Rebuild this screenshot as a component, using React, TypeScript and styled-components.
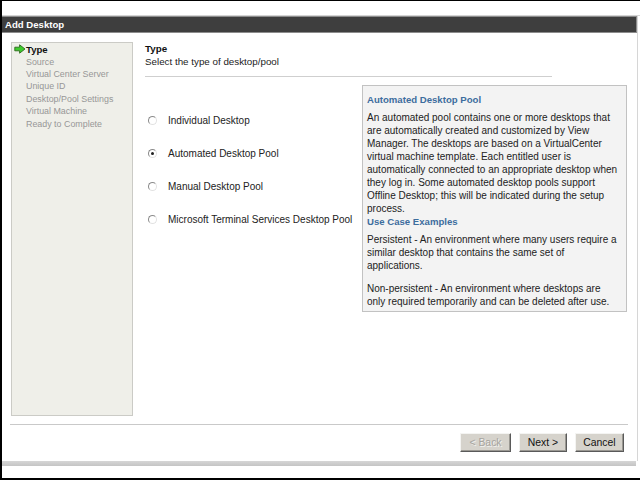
import React from 'react'
import styled, { createGlobalStyle } from 'styled-components'

const GlobalStyle = createGlobalStyle`
  html, body {
    margin: 0;
    padding: 0;
    background: #000000;
  }
  * {
    box-sizing: border-box;
  }
`

const Screen = styled.div`
  width: 640px;
  height: 480px;
  display: flex;
  flex-direction: column;
  background: #ffffff;
  border-top: 1px solid #000000;
  border-left: 2px solid #000000;
  border-bottom: 2px solid #000000;
  font-family: 'Liberation Sans', Arial, sans-serif;
  overflow: hidden;
`

const TopStrip = styled.div`
  height: 15px;
  border-bottom: 1px solid #d4d4d4;
`

const Dialog = styled.div`
  width: 636px;
  display: flex;
  flex-direction: column;
  border-right: 1px solid #d6d6d6;
`

const TitleBar = styled.div`
  height: 17px;
  display: flex;
  align-items: center;
  padding-left: 3px;
  background: #3e3e3e;
  border: 1px solid #8c8c8c;
  border-left: none;
  color: #ffffff;
  font-size: 9.6px;
  font-weight: bold;
`

const Body = styled.div`
  display: flex;
  padding: 9px 10px 0 9px;
  gap: 12px;
`

const Nav = styled.div`
  width: 122px;
  height: 374px;
  display: flex;
  flex-direction: column;
  background: #efefe9;
  border: 1px solid #cbcbc6;
  padding-left: 1px;
`

const NavItem = styled.div<{ $current?: boolean }>`
  display: flex;
  align-items: center;
  height: 12.4px;
  padding-left: 13px;
  font-size: ${(p) => (p.$current ? '9.6px' : '8.9px')};
  font-weight: ${(p) => (p.$current ? 'bold' : 'normal')};
  color: ${(p) => (p.$current ? '#111111' : '#979797')};
  white-space: nowrap;
  position: relative;

  svg {
    position: absolute;
    left: 1px;
    top: 1px;
  }
`

const Main = styled.div`
  flex: 1;
  display: flex;
  flex-direction: column;
`

const Heading = styled.div`
  font-size: 9.8px;
  font-weight: bold;
  line-height: 13px;
  color: #111111;
`

const SubHeading = styled.div`
  font-size: 9.8px;
  line-height: 13px;
  color: #222222;
`

const Rule = styled.div`
  width: 407px;
  height: 1px;
  margin-top: 8px;
  background: #cfcfcf;
`

const Content = styled.div`
  display: flex;
  margin-top: 8px;
`

const Options = styled.div`
  width: 217px;
  display: flex;
  flex-direction: column;
  gap: 20px;
  padding: 29px 0 0 3px;
`

const Option = styled.label`
  display: flex;
  align-items: center;
  height: 13px;
  gap: 11px;
  font-size: 10px;
  color: #222222;
  white-space: nowrap;
`

const Radio = styled.span<{ $checked?: boolean }>`
  width: 9px;
  height: 9px;
  flex: none;
  border-radius: 50%;
  border: 1px solid;
  border-color: #8a8a8a #e2e2e2 #e2e2e2 #8a8a8a;
  background: #ffffff;
  display: flex;
  align-items: center;
  justify-content: center;

  &::after {
    content: '';
    width: 3px;
    height: 3px;
    border-radius: 50%;
    background: ${(p) => (p.$checked ? '#202020' : 'transparent')};
  }
`

const InfoPanel = styled.div`
  flex: 1;
  height: 227px;
  background: #f3f3f3;
  border: 1px solid #c2c2c2;
  padding: 7px 4px 0 4px;
  font-size: 10px;
  line-height: 13px;
  color: #222222;
  white-space: nowrap;
`

const InfoTitle = styled.div<{ $gap: number }>`
  font-size: 9.6px;
  font-weight: bold;
  color: #3d6d9e;
  margin-bottom: ${(p) => p.$gap}px;
`

const Para = styled.p<{ $after?: number }>`
  margin: 0 0 ${(p) => p.$after ?? 0}px 0;
`

const Footer = styled.div`
  display: flex;
  flex-direction: column;
  margin-top: 8px;
`

const Separator = styled.div`
  height: 1px;
  margin: 0 9px 0 8px;
  background: #c9c9c9;
`

const ButtonRow = styled.div`
  display: flex;
  justify-content: flex-end;
  gap: 8px;
  padding: 8px 13px 9px 0;
`

const Button = styled.button<{ $width: number }>`
  width: ${(p) => p.$width}px;
  height: 19px;
  padding: 0;
  font-family: 'Liberation Sans', Arial, sans-serif;
  font-size: 10.4px;
  color: #111111;
  background: #d6d3cc;
  border: 1px solid;
  border-color: #f4f4f2 #5a5a5a #5a5a5a #f4f4f2;
  box-shadow: inset -1px -1px 0 #9a9892;

  &:disabled {
    color: #a6a49e;
    text-shadow: 1px 1px 0 #f2f2f0;
  }
`

const BottomBand = styled.div`
  height: 5px;
  width: 634px;
  background: linear-gradient(#d6d6d6, #c4c4c4);
`

const Arrow = () => (
  <svg width="12" height="10" viewBox="0 0 12 10">
    <path
      d="M0.8 3.2 H5.6 V0.8 L11 5 L5.6 9.2 V6.8 H0.8 Z"
      fill="#3fcc2e"
      stroke="#2b6a1c"
      strokeWidth="0.9"
      strokeLinejoin="round"
    />
  </svg>
)

const steps = [
  'Source',
  'Virtual Center Server',
  'Unique ID',
  'Desktop/Pool Settings',
  'Virtual Machine',
  'Ready to Complete',
]

const options = [
  { label: 'Individual Desktop', checked: false },
  { label: 'Automated Desktop Pool', checked: true },
  { label: 'Manual Desktop Pool', checked: false },
  { label: 'Microsoft Terminal Services Desktop Pool', checked: false },
]

const App = () => (
  <>
    <GlobalStyle />
    <Screen>
      <TopStrip />
      <Dialog>
        <TitleBar>Add Desktop</TitleBar>
        <Body>
          <Nav>
            <NavItem $current>
              <Arrow />
              Type
            </NavItem>
            {steps.map((s) => (
              <NavItem key={s}>{s}</NavItem>
            ))}
          </Nav>
          <Main>
            <Heading>Type</Heading>
            <SubHeading>Select the type of desktop/pool</SubHeading>
            <Rule />
            <Content>
              <Options>
                {options.map((o) => (
                  <Option key={o.label}>
                    <Radio $checked={o.checked} />
                    {o.label}
                  </Option>
                ))}
              </Options>
              <InfoPanel>
                <InfoTitle $gap={5}>Automated Desktop Pool</InfoTitle>
                <Para>
                  An automated pool contains one or more desktops that
                  <br />
                  are automatically created and customized by View
                  <br />
                  Manager. The desktops are based on a VirtualCenter
                  <br />
                  virtual machine template. Each entitled user is
                  <br />
                  automatically connected to an appropriate desktop when
                  <br />
                  they log in. Some automated desktop pools support
                  <br />
                  Offline Desktop; this will be indicated during the setup
                  <br />
                  process.
                </Para>
                <InfoTitle $gap={5}>Use Case Examples</InfoTitle>
                <Para $after={10}>
                  Persistent - An environment where many users require a
                  <br />
                  similar desktop that contains the same set of
                  <br />
                  applications.
                </Para>
                <Para>
                  Non-persistent - An environment where desktops are
                  <br />
                  only required temporarily and can be deleted after use.
                </Para>
              </InfoPanel>
            </Content>
          </Main>
        </Body>
        <Footer>
          <Separator />
          <ButtonRow>
            <Button $width={51} disabled>
              &lt; Back
            </Button>
            <Button $width={48}>Next &gt;</Button>
            <Button $width={49}>Cancel</Button>
          </ButtonRow>
        </Footer>
      </Dialog>
      <BottomBand />
    </Screen>
  </>
)

export default App
